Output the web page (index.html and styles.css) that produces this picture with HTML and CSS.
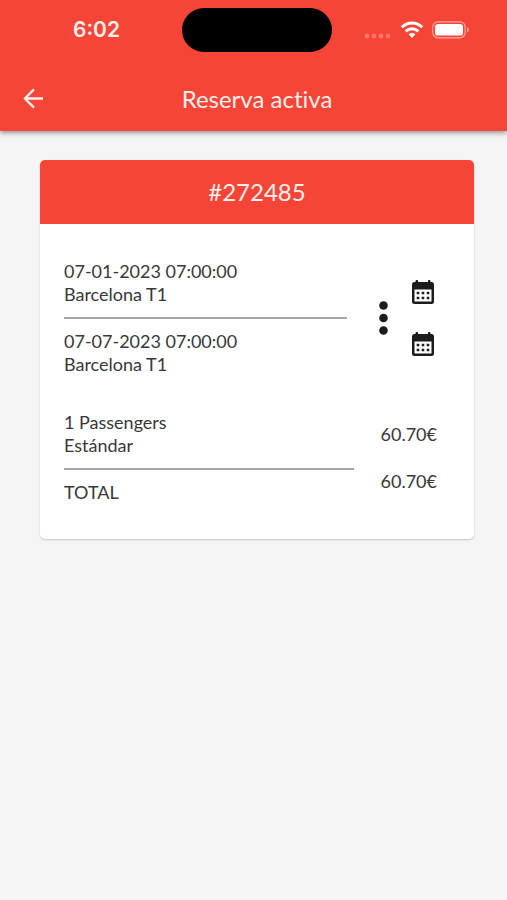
FILE: index.html
```html
<!DOCTYPE html>
<html lang="es">
<head>
<meta charset="utf-8">
<meta name="viewport" content="width=device-width, initial-scale=1">
<title>Reserva activa</title>
<link rel="stylesheet" href="styles.css">
</head>
<body>
<header class="top">
  <div class="status">
    <time class="clock">6:02</time>
    <div class="island"></div>
    <div class="signals">
      <svg class="cell" viewBox="0 0 28 6" aria-hidden="true"><circle cx="3" cy="3" r="2.4"/><circle cx="10" cy="3" r="2.4"/><circle cx="17" cy="3" r="2.4"/><circle cx="24" cy="3" r="2.4"/></svg>
      <svg class="wifi" viewBox="0 0 24 18" aria-hidden="true"><path class="arc" d="M1.800 6.300C7.400 .6 16.600 .6 22.200 6.300"/><path class="arc" d="M5.700 10.300C9.200 7 14.800 7 18.300 10.300"/><path class="tip" d="M8.600 13.300C10.500 11.600 13.500 11.600 15.400 13.300L12 17Z"/></svg>
      <svg class="battery" viewBox="0 0 38 18" aria-hidden="true"><rect class="shell" x=".8" y=".8" width="32.4" height="16" rx="5.2"/><rect class="charge" x="3" y="3" width="28" height="11.6" rx="3.2"/><path class="cap" d="M35 6.2C37.6 7 37.6 10.600 35 11.400Z"/></svg>
    </div>
  </div>
  <div class="bar">
    <button class="icon-button" type="button" aria-label="Volver">
      <svg class="arrow" viewBox="0 0 22 22" aria-hidden="true"><path d="M21 11H2.500M11.500 1.500L2 11l9.500 9.500"/></svg>
    </button>
    <h1 class="title">Reserva activa</h1>
  </div>
</header>
<main class="page">
  <article class="card">
    <h2 class="card-head">#272485</h2>
    <div class="card-body">
      <section class="row">
        <div class="details">
          <p>07-01-2023 07:00:00<br>Barcelona T1</p>
          <hr>
          <p>07-07-2023 07:00:00<br>Barcelona T1</p>
        </div>
        <div class="actions">
          <button class="icon-button" type="button" aria-label="Más opciones">
            <svg class="dots" viewBox="0 0 9 34" aria-hidden="true"><circle cx="4.500" cy="4.500" r="4.300"/><circle cx="4.500" cy="17" r="4.300"/><circle cx="4.500" cy="29.500" r="4.300"/></svg>
          </button>
          <div class="calendars">
            <button class="icon-button" type="button" aria-label="Cambiar fecha de ida">
              <svg class="calendar" viewBox="0 0 22 24" aria-hidden="true"><path fill-rule="evenodd" d="M3.500 1.200a1.300 1.300 0 0 1 2.600 0V2h9.800v-.8a1.300 1.300 0 0 1 2.600 0V2h1A2.500 2.500 0 0 1 22 4.500v17a2.500 2.500 0 0 1-2.500 2.500h-17A2.500 2.500 0 0 1 0 21.500v-17A2.500 2.500 0 0 1 2.500 2h1ZM2.500 9.500v12h17v-12Z"/><path d="M4.700 11.700h2.600v2.600H4.700zM9.700 11.700h2.600v2.600H9.700zM14.700 11.700h2.600v2.600h-2.600zM4.700 16.700h2.600v2.600H4.700zM9.700 16.700h2.600v2.600H9.700zM14.700 16.700h2.600v2.600h-2.600z"/></svg>
            </button>
            <button class="icon-button" type="button" aria-label="Cambiar fecha de vuelta">
              <svg class="calendar" viewBox="0 0 22 24" aria-hidden="true"><path fill-rule="evenodd" d="M3.500 1.200a1.300 1.300 0 0 1 2.600 0V2h9.800v-.8a1.300 1.300 0 0 1 2.600 0V2h1A2.500 2.500 0 0 1 22 4.500v17a2.500 2.500 0 0 1-2.500 2.500h-17A2.500 2.500 0 0 1 0 21.500v-17A2.500 2.500 0 0 1 2.500 2h1ZM2.500 9.500v12h17v-12Z"/><path d="M4.700 11.700h2.600v2.600H4.700zM9.700 11.700h2.600v2.600H9.700zM14.700 11.700h2.600v2.600h-2.600zM4.700 16.700h2.600v2.600H4.700zM9.700 16.700h2.600v2.600H9.700zM14.700 16.700h2.600v2.600h-2.600z"/></svg>
            </button>
          </div>
        </div>
      </section>
      <section class="row">
        <div class="details">
          <p>1 Passengers<br>Estándar</p>
          <hr>
          <p>TOTAL</p>
        </div>
        <div class="prices">
          <span>60.70€</span>
          <span>60.70€</span>
        </div>
      </section>
    </div>
  </article>
</main>
</body>
</html>
```
FILE: styles.css
```css
* {
  box-sizing: border-box;
}

body {
  margin: 0;
  min-height: 100vh;
  background: #f5f5f5;
  color: #383838;
  font: 18px/23px Lato, sans-serif;
  font-variant-ligatures: none;
}

h1, h2, p {
  margin: 0;
  font-weight: 400;
}

svg {
  display: block;
}

.top {
  background: #f64436;
  color: #fff0ed;
  box-shadow: 0 2px 5px rgba(0, 0, 0, .4);
}

.status {
  display: grid;
  grid-template-columns: 1fr 150px 1fr;
  align-items: center;
  padding: 8px 0 0 7px;
}

.clock {
  justify-self: center;
  padding-left: 4px;
  font: 600 21px/44px Inter, sans-serif;
}

.island {
  height: 44px;
  border-radius: 22px;
  background: #000;
}

.signals {
  display: flex;
  align-items: center;
  justify-content: flex-end;
  padding-right: 37px;
}

.cell {
  width: 28px;
  margin: 11px 8px 0 0;
  fill: #ff7668;
}

.wifi {
  width: 24px;
  margin-right: 8px;
}

.arc {
  fill: none;
  stroke: #fff;
  stroke-width: 3;
}

.tip, .charge {
  fill: #fff;
}

.battery {
  width: 38px;
}

.shell {
  fill: none;
  stroke: #ffa69c;
  stroke-width: 1.2;
}

.cap {
  fill: #ffa69c;
}

.bar {
  display: grid;
  grid-template-columns: 48px 1fr 48px;
  align-items: center;
  height: 66px;
  margin-top: 13px;
  padding-left: 7px;
}

.title {
  font-size: 24px;
  text-align: center;
}

.icon-button {
  display: block;
  padding: 0;
  border: 0;
  background: none;
  color: #1c1c1c;
  cursor: pointer;
}

.arrow {
  width: 21px;
  margin-left: 16px;
  fill: none;
  stroke: #fff0ed;
  stroke-width: 2.4;
}

.page {
  padding: 29px 33px 29px 40px;
}

.card {
  overflow: hidden;
  border-radius: 5px;
  background: #fff;
  box-shadow: 0 1px 2px rgba(0, 0, 0, .2);
}

.card-head {
  background: #f64436;
  color: #fff0ed;
  font-size: 24px;
  line-height: 64px;
  text-align: center;
}

.card-body {
  display: grid;
  gap: 35px;
  padding: 36px 24px 35px;
}

.row {
  display: flex;
  align-items: center;
}

.details {
  flex: 1;
}

hr {
  height: 2px;
  margin: 11px 0;
  border: 0;
  background: #a6a6a6;
}

.actions {
  display: flex;
  align-items: center;
  gap: 24px;
  margin: 0 16px 0 32px;
}

.dots {
  width: 9px;
  fill: #1c1c1c;
}

.calendars {
  display: grid;
  gap: 28px;
}

.calendar {
  width: 22px;
  fill: #1c1c1c;
}

.prices {
  display: grid;
  gap: 24px;
  margin: 0 13px 0 27px;
}
```
